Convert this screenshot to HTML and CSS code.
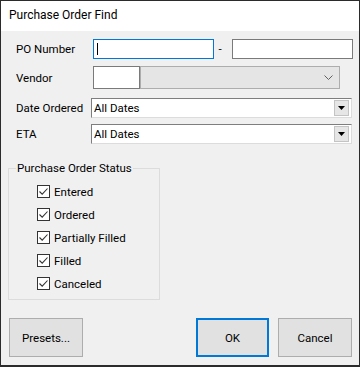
FILE: index.html
```html
<!DOCTYPE html>
<html lang="en">
<head>
    <meta charset="UTF-8">
    <title>Purchase Order Find</title>
    <link rel="stylesheet" href="styles.css">
</head>
<body>
<div class="window">
    <div class="titlebar">Purchase Order Find</div>
    <div class="content">
        <div class="row row-po">
            <label class="label">PO Number</label>
            <div class="textbox focus"><span class="caret"></span></div>
            <span class="dash">-</span>
            <div class="textbox last"></div>
        </div>
        <div class="row row-vendor">
            <label class="label">Vendor</label>
            <div class="textbox code"></div>
            <div class="combo">
                <svg width="9" height="6" viewBox="0 0 9 6"><path d="M0.5 0.5 L4.5 4.5 L8.5 0.5" fill="none" stroke="#606060" stroke-width="1"/></svg>
            </div>
        </div>
        <div class="row row-date">
            <label class="label">Date Ordered</label>
            <div class="dropdown">
                <span class="value">All Dates</span>
                <span class="drop-btn"><svg width="7" height="4" viewBox="0 0 7 4"><path d="M0 0 H7 L3.5 4 Z" fill="#000"/></svg></span>
            </div>
        </div>
        <div class="row row-eta">
            <label class="label">ETA</label>
            <div class="dropdown">
                <span class="value">All Dates</span>
                <span class="drop-btn"><svg width="7" height="4" viewBox="0 0 7 4"><path d="M0 0 H7 L3.5 4 Z" fill="#000"/></svg></span>
            </div>
        </div>

        <fieldset class="status">
            <legend>Purchase Order Status</legend>
            <ul class="checks">
                <li><span class="check"><svg width="11" height="11" viewBox="0 0 11 11"><path d="M1.5 5.5 L4.2 8.2 L9.5 2.5" fill="none" stroke="#333" stroke-width="1.1"/></svg></span>Entered</li>
                <li><span class="check"><svg width="11" height="11" viewBox="0 0 11 11"><path d="M1.5 5.5 L4.2 8.2 L9.5 2.5" fill="none" stroke="#333" stroke-width="1.1"/></svg></span>Ordered</li>
                <li><span class="check"><svg width="11" height="11" viewBox="0 0 11 11"><path d="M1.5 5.5 L4.2 8.2 L9.5 2.5" fill="none" stroke="#333" stroke-width="1.1"/></svg></span>Partially Filled</li>
                <li><span class="check"><svg width="11" height="11" viewBox="0 0 11 11"><path d="M1.5 5.5 L4.2 8.2 L9.5 2.5" fill="none" stroke="#333" stroke-width="1.1"/></svg></span>Filled</li>
                <li><span class="check"><svg width="11" height="11" viewBox="0 0 11 11"><path d="M1.5 5.5 L4.2 8.2 L9.5 2.5" fill="none" stroke="#333" stroke-width="1.1"/></svg></span>Canceled</li>
            </ul>
        </fieldset>

        <div class="buttons">
            <button class="btn presets">Presets...</button>
            <button class="btn ok">OK</button>
            <button class="btn cancel">Cancel</button>
        </div>
    </div>
</div>
</body>
</html>
```

FILE: styles.css
```css
body{
    margin:0;
    padding:0;
    font-family: Roboto, "Liberation Sans", Arial, sans-serif;
    font-size:11.5px;
    color:#000;
    background:#fff;
}

.window{
    box-sizing: border-box;
    width:360px;
    height:367px;
    border:1px solid #2b2b2b;
    border-bottom-width:2px;
    background:#f0f0f0;
}

.titlebar{
    height:30px;
    line-height:29px;
    padding-left:8px;
    font-size:12px;
    background:#fff;
}

.content{
    padding:8px 7px 0 15px;
}

.row{
    display:flex;
    align-items:center;
}

.label{
    width:77px;
    flex-shrink:0;
    line-height:16px;
}

.textbox{
    box-sizing: border-box;
    height:20px;
    width:121px;
    border:1px solid #7a7a7a;
    background:#fff;
    position: relative;
}

.textbox.focus{
    border-color:#0078d7;
}

.caret{
    position: absolute;
    left:3px;
    top:3px;
    width:1px;
    height:12px;
    background:#000;
}

.dash{
    box-sizing: border-box;
    width:19px;
    padding-left:5px;
    line-height:16px;
}

.textbox.last{
    margin-right:-1px;
}

.row-vendor{
    margin-top:7px;
}

.textbox.code{
    width:47px;
    height:23px;
}

.combo{
    box-sizing: border-box;
    width:200px;
    height:23px;
    border:1px solid #adadad;
    background:#e5e5e5;
    display:flex;
    align-items:center;
    justify-content:flex-end;
    padding-right:6px;
}

.row-date{
    margin-top:9px;
}

.row-eta{
    margin-top:6px;
}

.row-date .label,
.row-eta .label{
    width:75px;
}

.dropdown{
    box-sizing: border-box;
    flex:1;
    height:20px;
    border:1px solid;
    border-color:#7e7e7e #dcdcdc #dcdcdc #7e7e7e;
    background:#fff;
    display:flex;
    align-items:center;
    padding:0 2px 0 2px;
}

.dropdown .value{
    flex:1;
    line-height:16px;
}

.drop-btn{
    box-sizing: border-box;
    width:15px;
    height:16px;
    border:1px solid #c4c4c4;
    background:#e6e6e6;
    display:flex;
    align-items:center;
    justify-content:center;
}

.status{
    margin:16px 0 0 -8px;
    width:152px;
    box-sizing: border-box;
    border:1px solid #dcdcdc;
    padding:0 0 4px 7px;
}

.status legend{
    padding:0 1px;
    line-height:16px;
}

.checks{
    list-style:none;
    margin:4px 0 0 21px;
    padding:0;
}

.checks li{
    height:23px;
    display:flex;
    align-items:center;
}

.check{
    box-sizing: border-box;
    width:13px;
    height:13px;
    border:1px solid #333;
    background:#fff;
    margin-right:4px;
    display:flex;
}

.buttons{
    display:flex;
    gap:9px;
    margin:18px 0 0 -7px;
}

.btn{
    box-sizing: border-box;
    height:39px;
    width:74px;
    border:1px solid #adadad;
    background:#e1e1e1;
    font-family: inherit;
    font-size:11.5px;
    color:#000;
    padding:0;
}

.btn.ok{
    margin-left:auto;
    width:73px;
    border:2px solid #0078d7;
}
```
